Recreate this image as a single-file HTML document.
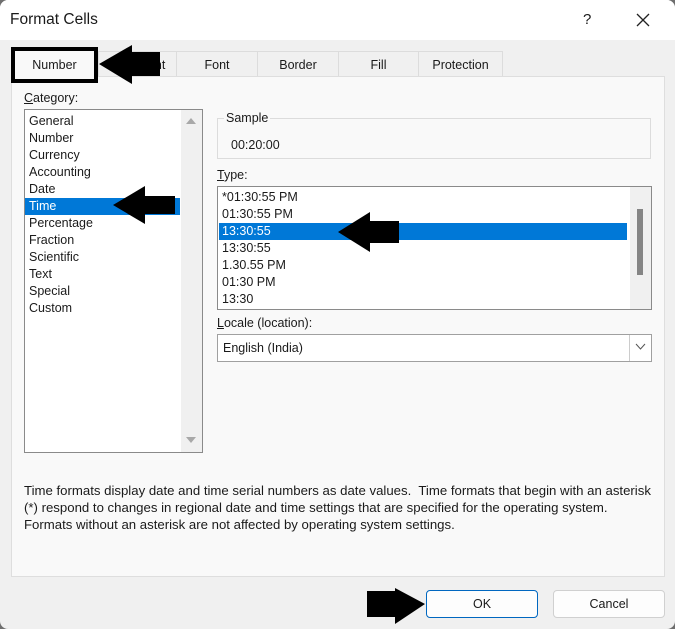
<!DOCTYPE html>
<html><head><style>
body{margin:0;width:675px;height:629px;background:#6f6f6f;position:relative;overflow:hidden;font-family:"Liberation Sans",sans-serif;font-size:12px;color:#1a1a1a}
.a{position:absolute}
.dlg{left:0;top:0;width:675px;height:629px;background:#f0f0f0;border-radius:8px;overflow:hidden}
.title{left:0;top:0;width:675px;height:40px;background:#fff}
.tab{top:51px;height:25px;background:#f0f0f0;border:1px solid #dcdcdc;border-bottom:none;text-align:center;line-height:26px;font-size:12.5px;box-sizing:border-box}
.list div{height:17px;line-height:17px;padding-left:4px;white-space:nowrap}
.sel{background:#0078d7;color:#fff}
.btn{top:590px;height:28px;background:#fdfdfd;border:1px solid #d0d0d0;border-radius:4px;box-sizing:border-box;text-align:center;line-height:27px;font-size:12.5px}
</style></head><body>
<div class="a dlg">
 <div class="a title"></div>
 <div class="a" style="left:10px;top:11px;font-size:15.5px">Format Cells</div>
 <div class="a" style="left:583px;top:11px;font-size:15px">?</div>
 <svg class="a" style="left:636px;top:13px" width="14" height="14"><path d="M1 1L13 13M13 1L1 13" stroke="#222" stroke-width="1.3"/></svg>

 <div class="a" style="left:11px;top:76px;width:654px;height:501px;background:#f9f9f9;border:1px solid #dedede;box-sizing:border-box"></div>
 <div class="a tab" style="left:98px;width:79px">Alignment</div>
 <div class="a tab" style="left:176px;width:82px">Font</div>
 <div class="a tab" style="left:257px;width:82px">Border</div>
 <div class="a tab" style="left:338px;width:81px">Fill</div>
 <div class="a tab" style="left:418px;width:85px">Protection</div>
 <div class="a" style="left:11px;top:47px;width:87px;height:36px;background:#f9f9f9;border:4px solid #000;box-sizing:border-box;text-align:center;line-height:28px;font-size:12.5px">Number</div>

 <div class="a" style="left:24px;top:91px;font-size:12.5px"><u>C</u>ategory:</div>
 <div class="a list" style="left:24px;top:109px;width:179px;height:344px;background:#fff;border:1px solid #8a8a8a;box-sizing:border-box;font-size:12.5px">
  <div style="margin-top:3px">General</div><div>Number</div><div>Currency</div><div>Accounting</div><div>Date</div><div class="sel" style="width:151px">Time</div><div>Percentage</div><div>Fraction</div><div>Scientific</div><div>Text</div><div>Special</div><div>Custom</div>
 </div>
 <div class="a" style="left:181px;top:110px;width:21px;height:342px;background:#f0f0f0"></div>
 <svg class="a" style="left:185px;top:116px" width="12" height="10"><path d="M1 8L6 2L11 8Z" fill="#a8a8a8"/></svg>
 <svg class="a" style="left:185px;top:435px" width="12" height="10"><path d="M1 2L6 8L11 2Z" fill="#a8a8a8"/></svg>

 <div class="a" style="left:217px;top:118px;width:434px;height:41px;border:1px solid #dcdcdc;box-sizing:border-box"></div>
 <div class="a" style="left:224px;top:111px;background:#f9f9f9;padding:0 2px;font-size:12.5px">Sample</div>
 <div class="a" style="left:231px;top:138px;font-size:12.5px">00:20:00</div>

 <div class="a" style="left:217px;top:168px;font-size:12.5px"><u>T</u>ype:</div>
 <div class="a list" style="left:217px;top:186px;width:435px;height:124px;background:#fff;border:1px solid #8a8a8a;box-sizing:border-box;font-size:12.5px;overflow:hidden">
  <div style="margin-top:2px">*01:30:55 PM</div><div>01:30:55 PM</div><div class="sel" style="width:405px;margin-left:1px;padding-left:3px">13:30:55</div><div>13:30:55</div><div>1.30.55 PM</div><div>01:30 PM</div><div>13:30</div>
 </div>
 <div class="a" style="left:630px;top:187px;width:21px;height:122px;background:#f0f0f0"></div>
 <div class="a" style="left:637px;top:209px;width:6px;height:66px;background:#858585"></div>

 <div class="a" style="left:217px;top:316px;font-size:12.5px"><u>L</u>ocale (location):</div>
 <div class="a" style="left:217px;top:334px;width:435px;height:28px;background:#fff;border:1px solid #a0a0a0;box-sizing:border-box;line-height:27px;padding-left:5px;font-size:12.5px">English (India)</div>
 <div class="a" style="left:629px;top:335px;width:1px;height:26px;background:#ccc"></div>
 <svg class="a" style="left:635px;top:343px" width="11" height="8"><path d="M1 1L5.5 6L10 1" stroke="#555" fill="none"/></svg>

 <div class="a" style="left:24px;top:482px;font-size:13.2px;line-height:17px;white-space:nowrap">Time formats display date and time serial numbers as date values.&nbsp; Time formats that begin with an asterisk<br>(*) respond to changes in regional date and time settings that are specified for the operating system.<br>Formats without an asterisk are not affected by operating system settings.</div>

 <div class="a btn" style="left:426px;width:112px;border-color:#0067c0">OK</div>
 <div class="a btn" style="left:553px;width:112px">Cancel</div>

 <svg class="a" style="left:0;top:0" width="675" height="629">
  <path d="M99 64L132 45V52H160V76H132V84Z" fill="#000"/>
  <path d="M113 205L145 186V196H175V214H145V224Z" fill="#000"/>
  <path d="M338 232L370 212V221H399V243H370V252Z" fill="#000"/>
  <path d="M425 604L395 588V591H367V617H395V624Z" fill="#000"/>
 </svg>
</div>
</body></html>
